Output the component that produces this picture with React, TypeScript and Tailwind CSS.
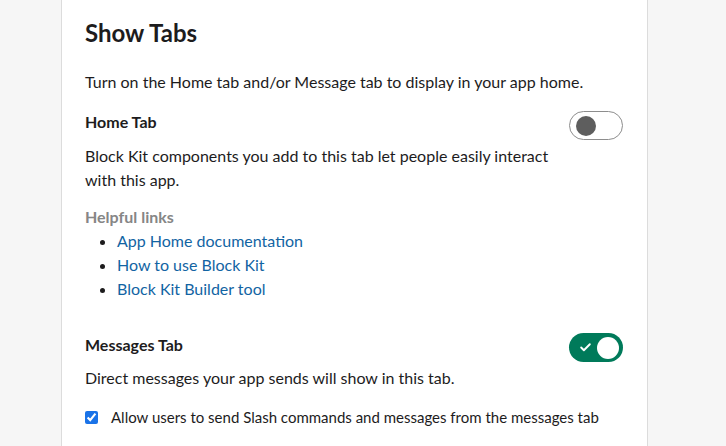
import { Check } from 'lucide-react'

const links = ['App Home documentation', 'How to use Block Kit', 'Block Kit Builder tool']

function Toggle({ on }: { on: boolean }) {
  if (on) {
    return (
      <div className="flex h-[29px] w-[54px] shrink-0 items-center justify-between rounded-full bg-[#007a5a] pl-[10px] pr-[4px]">
        <Check className="h-[13px] w-[13px] text-white" strokeWidth={3.5} />
        <span className="h-[22px] w-[22px] rounded-full bg-white" />
      </div>
    )
  }
  return (
    <div className="flex h-[29px] w-[54px] shrink-0 items-center rounded-full border border-[#8d8d8d] bg-white pl-[6px]">
      <span className="h-[20px] w-[20px] rounded-full bg-[#5e5e5e]" />
    </div>
  )
}

export default function App() {
  return (
    <div className="flex h-[446px] w-[726px] overflow-hidden bg-[#f6f6f6] font-['Lato','Noto_Sans',sans-serif] text-[16px] leading-6 text-[#1d1c1d]">
      <div className="ml-[61px] h-full w-[587px] border-x border-[#dcdcdc] bg-white pl-[23px] pr-6 pt-[17px]">
        <h1 className="text-[24px] font-bold leading-8">Show Tabs</h1>
        <p className="mt-[21px]">Turn on the Home tab and/or Message tab to display in your app home.</p>

        <div className="mt-4 flex items-start justify-between">
          <div>
            <h2 className="font-bold">Home Tab</h2>
            <p className="mt-[10px] max-w-[475px]">
              Block Kit components you add to this tab let people easily interact with this app.
            </p>
          </div>
          <div className="mt-[1px]">
            <Toggle on={false} />
          </div>
        </div>

        <p className="mt-[13px] font-bold text-[#868686]">Helpful links</p>
        <ul className="list-disc pl-8 marker:text-[#1d1c1d]">
          {links.map((item) => (
            <li key={item} className="text-[#1264a3]">
              {item}
            </li>
          ))}
        </ul>

        <div className="mt-[32px] flex items-start justify-between">
          <div>
            <h2 className="font-bold">Messages Tab</h2>
            <p className="mt-[9px]">Direct messages your app sends will show in this tab.</p>
          </div>
          <Toggle on={true} />
        </div>

        <label className="mt-[15px] flex items-center gap-[13px] text-[15px]">
          <input type="checkbox" checked readOnly className="h-[13px] w-[13px] accent-[#1a73e8]" />
          <span>Allow users to send Slash commands and messages from the messages tab</span>
        </label>
      </div>
    </div>
  )
}
